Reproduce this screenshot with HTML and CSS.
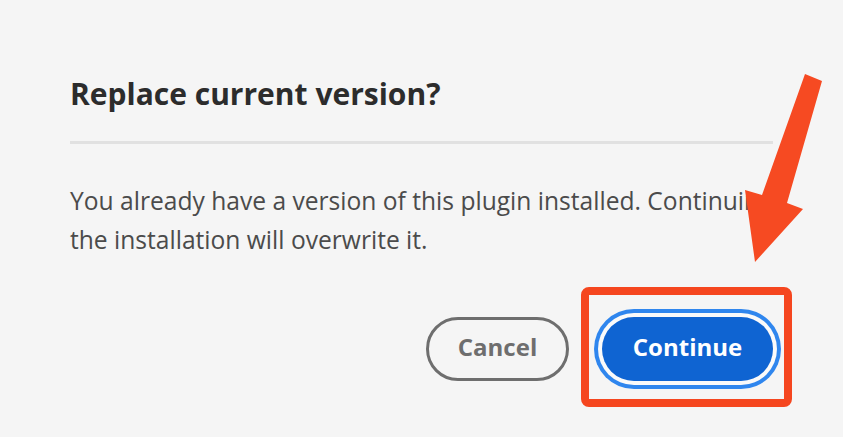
FILE: index.html
```html
<!DOCTYPE html>
<html lang="en">
<head>
  <meta charset="UTF-8" />
  <title>Replace current version?</title>
  <link rel="stylesheet" href="styles.css">
</head>
<body>

<div class="dialog">
  <h2 class="dialog-title">Replace current version?</h2>
  <hr class="divider">
  <p class="dialog-text">You already have a version of this plugin installed. Continuing the installation will overwrite it.</p>
  <div class="buttons">
    <button class="btn btn-cancel">Cancel</button>
    <div class="highlight">
      <button class="btn btn-primary">Continue</button>
    </div>
  </div>
</div>

<svg class="arrow" width="843" height="437" viewBox="0 0 843 437">
  <polygon points="805,74 822,81 787,203 803,209 755,262 745,190 762,195" fill="#f64a22"/>
</svg>

</body>
</html>
```

FILE: styles.css
```css
html, body {
  height: 100%;
}

body {
  margin: 0;
  padding: 0;
  background: #f5f5f5;
  font-family: "Open Sans", sans-serif;
}

.dialog {
  width: 703px;
  padding: 76px 0 56px 70px;
}

.dialog-title {
  margin: 0;
  font-size: 30px;
  line-height: 36px;
  font-weight: 700;
  color: #2c2c2c;
}

.divider {
  margin: 29px 0 0;
  border: none;
  height: 3px;
  background: #e1e1e1;
}

.dialog-text {
  width: 730px;
  margin: 37px 0 0;
  font-size: 24.6px;
  line-height: 39px;
  color: #4b4b4b;
}

.buttons {
  display: flex;
  justify-content: flex-end;
  align-items: center;
  gap: 33px;
  margin-top: 58px;
}

.btn {
  height: 64px;
  padding: 0 0 5px;
  border-radius: 32px;
  font-family: inherit;
  font-size: 24px;
  font-weight: 700;
  cursor: pointer;
}

.btn-cancel {
  width: 143px;
  background: transparent;
  border: 3px solid #6e6e6e;
  color: #6e6e6e;
}

.btn-primary {
  display: block;
  width: 171px;
  background: #0f64d2;
  border: none;
  color: white;
  box-shadow: 0 0 0 4px #fafafa, 0 0 0 8px #2f86ee;
}

.highlight {
  margin: -30px -19px -26px -21px;
  padding: 22px 11px 18px 13px;
  border: 8px solid #f5461f;
  border-radius: 8px;
}

.arrow {
  position: absolute;
  left: 0;
  top: 0;
}
```
